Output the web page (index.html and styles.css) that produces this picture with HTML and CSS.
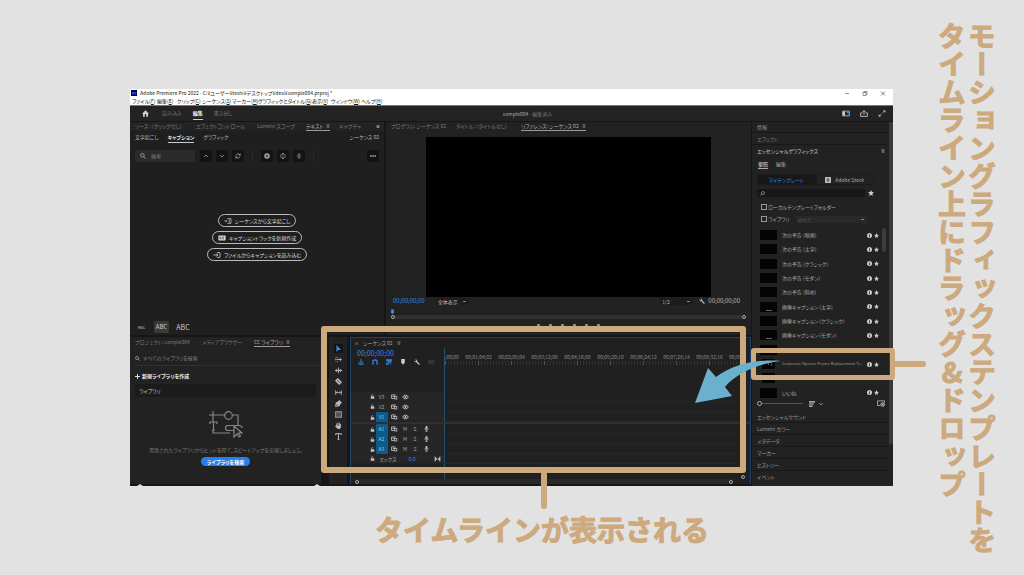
FILE: index.html
```html
<!DOCTYPE html>
<html lang="ja">
<head>
<meta charset="utf-8">
<title>タイムラインへのドラッグ&amp;ドロップ</title>
<link rel="stylesheet" href="styles.css">
</head>
<body>
<svg class="defs" aria-hidden="true">
  <symbol id="search" viewBox="0 0 10 10"><g fill="none" stroke="currentColor" stroke-width="1.4"><circle cx="4" cy="4" r="3"/><path d="M6.3 6.3 9.5 9.5"/></g></symbol>
  <symbol id="searchflip" viewBox="0 0 10 10"><g fill="none" stroke="currentColor" stroke-width="1.3"><circle cx="6" cy="4" r="3"/><path d="M3.7 6.3.5 9.5"/></g></symbol>
  <symbol id="star" viewBox="0 0 10 10"><path fill="currentColor" d="M5 0 6.5 3.4 10 3.8 7.3 6.2 8.1 9.8 5 8 1.9 9.8 2.7 6.2 0 3.8 3.5 3.4z"/></symbol>
  <symbol id="info" viewBox="0 0 10 10"><circle cx="5" cy="5" r="5" fill="currentColor"/><path d="M5 1.8v1.6M5 4.2v4" stroke="#222" stroke-width="1.6"/></symbol>
  <symbol id="home" viewBox="0 0 10 10"><path fill="currentColor" d="M5 .5 10 5.2H8.6V9.5H6V6.2H4V9.5H1.4V5.2H0z"/></symbol>
  <symbol id="lock" viewBox="0 0 10 10"><path d="M3 5V3a2 2 0 0 1 3.6-1" fill="none" stroke="currentColor" stroke-width="1.4"/><path fill="currentColor" d="M1.5 4.5h7v5h-7z"/></symbol>
  <symbol id="sync" viewBox="0 0 12 10"><path d="M1 1.5h7M1 1.5v6h4M3 4h7v4.5H6V4" fill="none" stroke="currentColor" stroke-width="1.5"/></symbol>
  <symbol id="eye" viewBox="0 0 12 10"><path d="M1 5q5-6.500 10 0-5 6.500-10 0z" fill="none" stroke="currentColor" stroke-width="1.6"/><circle cx="6" cy="5" r="1.800" fill="currentColor"/></symbol>
  <symbol id="mic" viewBox="0 0 10 12"><rect x="3" y="0" width="4" height="7" rx="2" fill="currentColor"/><path d="M1.500 5q0 3.500 3.500 3.500T8.500 5M5 8.500V11M3 11.300h4" fill="none" stroke="currentColor" stroke-width="1.400"/></symbol>
  <symbol id="wrench" viewBox="0 0 10 10"><path d="M4 4 8.500 8.700" stroke="currentColor" stroke-width="2" stroke-linecap="round"/><path d="M2 .6 4 2.500 2.600 4 .7 2A2.800 2.800 0 0 0 5 4.800 2.900 2.900 0 0 0 2 .6z" fill="currentColor"/></symbol>
  <symbol id="down" viewBox="0 0 10 10"><path d="M2 3.500 5 6.500 8 3.500" fill="none" stroke="currentColor" stroke-width="1.400"/></symbol>
  <symbol id="up" viewBox="0 0 10 10"><path d="M2 6.500 5 3.500 8 6.500" fill="none" stroke="currentColor" stroke-width="1.400"/></symbol>
  <symbol id="menu" viewBox="0 0 10 10"><path d="M1.500 2h7M1.500 5h7M1.500 8h7" stroke="currentColor" stroke-width="1.400"/></symbol>
  <symbol id="marker" viewBox="0 0 10 10"><path d="M2 0h6v6L5 9.500 2 6z" fill="currentColor"/></symbol>
</svg>

<div class="stage">
<main class="app">
  <header class="chrome">
    <div class="titlebar"><span class="logo">Pr</span><span class="title">Adobe Premiere Pro 2022 - C:¥ユーザー¥teshi¥デスクトップ¥desi¥sample004.prproj *</span>
      <span class="win">
        <button aria-label="最小化"><svg viewBox="0 0 10 10"><path d="M1 5h8" stroke="#333"/></svg></button>
        <button aria-label="元に戻す"><svg viewBox="0 0 10 10"><path d="M1 3h6v6H1zM3 3V1h6v6H7" fill="none" stroke="#333"/></svg></button>
        <button aria-label="閉じる"><svg viewBox="0 0 10 10"><path d="m1 1 8 8M9 1 1 9" stroke="#333" stroke-width="1.200"/></svg></button>
      </span>
    </div>
    <nav class="menubar"><span>ファイル(<u>F</u>)</span><span>編集(<u>E</u>)</span><span>クリップ(<u>C</u>)</span><span>シーケンス(<u>S</u>)</span><span>マーカー(<u>M</u>)</span><span>グラフィックとタイトル(<u>G</u>)</span><span>表示(<u>V</u>)</span><span>ウィンドウ(<u>W</u>)</span><span>ヘルプ(<u>H</u>)</span></nav>
  </header>

  <div class="topbar">
    <button class="homebtn" aria-label="ホーム"><svg><use href="#home"/></svg></button>
    <nav class="modes"><button>読み込み</button><button class="on">編集</button><button>書き出し</button></nav>
    <div class="project"><b>sample004</b> - 編集済み</div>
    <div class="topicons">
      <svg viewBox="0 0 12 10"><path d="M1 1.500h10v7H1z" fill="none" stroke="#ccc" stroke-width="1.200"/><path d="M1 2h3.500v6H1z" fill="#ccc"/><circle cx="9.500" cy="3" r="2.200" fill="#2d8ceb"/></svg>
      <svg viewBox="0 0 12 10"><path d="M3.500 4H1v5.300h10V4H8.500M6 7V1M3.800 3 6 .8 8.200 3" fill="none" stroke="#ccc" stroke-width="1.300"/></svg>
      <svg viewBox="0 0 12 10"><path d="M7 4 10 1M5 6 2 9" stroke="#ccc" stroke-width="1.300"/><path d="M7.500.5H11V4zM1 6v3.500h3.500z" fill="#ccc"/></svg>
    </div>
  </div>

  <div class="work">
    <div class="mainarea">
      <div class="upper">
        <section class="panel captions">
          <div class="tabs tabs-left"><span>ソース : (クリップなし)</span><span>エフェクトコントロール</span><span>Lumetri スコープ</span><span class="on">テキスト <svg><use href="#menu"/></svg></span><span>キャプチャ</span><b>»</b></div>
          <div class="subtabs"><button>文字起こし</button><button class="on">キャプション</button><button>グラフィック</button><span>シーケンス 02</span></div>
          <div class="tools-row">
            <label class="search"><svg><use href="#search"/></svg><input type="text" placeholder="検索" aria-label="検索"></label>
            <button aria-label="前へ"><svg><use href="#up"/></svg></button>
            <button aria-label="次へ"><svg><use href="#down"/></svg></button>
            <button aria-label="置換"><svg viewBox="0 0 10 10"><path d="M1.500 4A3.800 3.800 0 0 1 8.500 3.500M8.500 6A3.800 3.800 0 0 1 1.500 6.500M8.700.7v3H6M1.300 9.300v-3H4" fill="none" stroke="currentColor" stroke-width="1.200"/></svg></button>
            <i></i>
            <button aria-label="追加"><svg viewBox="0 0 10 10"><circle cx="5" cy="5" r="4.500" fill="currentColor"/><path d="M5 2.800v4.400M2.800 5h4.400" stroke="#111" stroke-width="1.300"/></svg></button>
            <button aria-label="分割"><svg viewBox="0 0 10 10"><path d="M1 3.500V3h8v.5M1 6.500V7h8v-.5M0 5h2M8 5h2M5 0v2.500M5 7.500V10M3.500 1.500 5 0l1.500 1.500M3.500 8.500 5 10l1.500-1.500" fill="none" stroke="currentColor"/></svg></button>
            <button aria-label="結合"><svg viewBox="0 0 10 10"><path d="M1 5h8M5 0v3.500M5 6.500V10M3 2l2 1.800L7 2M3 8l2-1.800L7 8" fill="none" stroke="currentColor"/></svg></button>
            <i></i>
            <button class="more" aria-label="その他"><svg viewBox="0 0 10 10"><g fill="#ddd"><circle cx="1.500" cy="5" r="1.300"/><circle cx="5" cy="5" r="1.300"/><circle cx="8.500" cy="5" r="1.300"/></g></svg></button>
          </div>
          <div class="starters">
            <button><svg viewBox="0 0 12 10"><path d="M5 1h6v8H5M0 5h4M7 3h2.500M7 5h2.500M7 7h2.500M3 3v4" fill="none" stroke="currentColor"/></svg>シーケンスから文字起こし</button>
            <button><svg viewBox="0 0 12 10"><rect y="1" width="12" height="8" rx="1" fill="currentColor"/><path d="M5 3.500H2.500v3H5M9.500 3.500H7v3h2.500" fill="none" stroke="#1f1f1f"/></svg>キャプショントラックを新規作成</button>
            <button><svg viewBox="0 0 12 10"><path d="M6 1h5v8H6M0 5h7M5 2.500 7.500 5 5 7.500" fill="none" stroke="currentColor" stroke-width="1.200"/></svg>ファイルからキャプションを読み込む</button>
          </div>
          <div class="sizes"><button>ABC</button><button class="on">ABC</button><button>ABC</button></div>
        </section>

        <section class="panel monitor">
          <div class="tabs tabs-mon"><span>プログラム: シーケンス 02</span><span>タイトル : (タイトルなし)</span><span class="on">リファレンス: シーケンス 02 <svg><use href="#menu"/></svg></span></div>
          <div class="screen"></div>
          <div class="moncontrols"><span class="tc">00;00;00;00</span><select aria-label="ズーム"><option>全体表示</option></select><span class="grow"></span><select aria-label="解像度"><option>1/2</option></select><svg><use href="#wrench"/></svg><span class="dur">00;00;00;00</span></div>
          <div class="monruler"><svg class="head"><use href="#marker"/></svg><div class="scrub"><i></i><i></i></div></div>
          <div class="transport"><i></i><i></i><i></i><i></i><i></i><i></i></div>
        </section>
      </div>

      <div class="lower">
        <section class="panel library">
          <div class="tabs tabs-lib"><span>プロジェクト: sample004</span><span>メディアブラウザー</span><span class="on">CC ライブラリ <svg><use href="#menu"/></svg></span></div>
          <label class="libsearch"><svg><use href="#search"/></svg><input type="text" placeholder="すべてのライブラリを検索" aria-label="ライブラリ検索"></label>
          <button class="newlib"><svg viewBox="0 0 10 10"><path d="M5 0v10M0 5h10" stroke="#ddd" stroke-width="2"/></svg>新規ライブラリを作成</button>
          <div class="libhead">ライブラリ</div>
          <svg class="art" viewBox="0 0 34 28"><g fill="none" stroke="#858585" stroke-width="1.200"><path d="M4 0v8M0 4h16M23 4h6v10M4 8v3M4 19v3h17"/><circle cx="19.500" cy="4.500" r="3.800"/><path d="M1 13v-2h7v2M4.500 11v8M3 19h3M25 19.500h-6q-2.500 0-2.500-2.500t2.500-2.500h11q3 0 3 2.500M25 15v11l3-3 2 3 1.500-1-2-3h3.500z"/></g></svg>
          <p>用意されたライブラリからヒントを得て、スピードアップを実現しましょう。</p>
          <button class="cta">ライブラリを検索</button>
        </section>

        <section class="toolstrip" aria-label="ツール">
          <button class="on" aria-label="選択"><svg viewBox="0 0 10 10"><path d="M2 0v10l2.800-3H9z" fill="#2d8ceb"/></svg></button>
          <button aria-label="トラック選択"><svg viewBox="0 0 10 10"><path d="M1 2h1M3.500 2h1M1 8h1M3.500 8h1M1 4v2M2 5h7M7 3l2 2-2 2" fill="none" stroke="currentColor" stroke-width="1.300"/></svg></button>
          <button aria-label="リップル"><svg viewBox="0 0 10 10"><path d="M5 1v8M0 5h10" stroke="currentColor" stroke-width="1.300"/><path d="M3 2.500v5L0 5zM7 2.500v5L10 5z" fill="currentColor"/></svg></button>
          <button aria-label="レーザー"><svg viewBox="0 0 10 10"><path d="M4 0 10 6 6 10 0 4z" fill="currentColor"/><path d="M3 3l4 4" stroke="#222"/></svg></button>
          <button aria-label="スリップ"><svg viewBox="0 0 12 10"><path d="M1 1v8M11 1v8M2 5h8M4 3 2 5l2 2M8 3l2 2-2 2" fill="none" stroke="currentColor" stroke-width="1.300"/></svg></button>
          <button aria-label="ペン"><svg viewBox="0 0 10 10"><path d="M6 0 10 4 8.500 5 6 9 0 10 1 4 5 1.500z" fill="currentColor"/><path d="M1 9l3-3" stroke="#222"/></svg></button>
          <button aria-label="長方形"><svg viewBox="0 0 10 10"><path d="M0.500 1h9v8h-9z" fill="#555" stroke="currentColor"/></svg></button>
          <button aria-label="手のひら"><svg viewBox="0 0 10 10"><path d="M2.500 6V2M4.300 5V1M6.200 5V1M8 6V2.500" stroke="currentColor" stroke-width="1.300"/><path d="M1.900 5h6.700v2L7 10H4L0 6l1-.7z" fill="currentColor"/></svg></button>
          <button aria-label="文字"><svg viewBox="0 0 10 10"><path d="M1 3V1h8v2M5 1v8M3.500 9h3" fill="none" stroke="currentColor" stroke-width="1.400"/></svg></button>
        </section>

        <section class="timeline">
          <div class="seqtab"><button aria-label="閉じる">×</button><span>シーケンス 02</span><svg><use href="#menu"/></svg></div>
          <div class="tlgrid">
            <div class="tlhead">
              <div class="tc">00;00;00;00</div>
              <div class="toggles">
                <svg class="blue" viewBox="0 0 10 10"><path d="M5 0v10M1 7l3-3M9 7 6 4M0 8.500h10" stroke="currentColor" stroke-width="1.500"/></svg>
                <svg class="blue" viewBox="0 0 10 10"><path d="M1.500 9.500V5a3.500 3.500 0 0 1 7 0v4.500" fill="none" stroke="currentColor" stroke-width="2"/></svg>
                <svg class="blue" viewBox="0 0 10 10"><path d="M0 1h10v2H0zM3 4h5v2H3zM0 7h4v2H0zM8 3v7" fill="currentColor" stroke="currentColor"/></svg>
                <svg><use href="#marker"/></svg>
                <svg><use href="#wrench"/></svg>
                <svg class="dim" viewBox="0 0 12 10"><path d="M1 1.500h10v7H1zM5 3.500H3v3h2M9 3.500H7v3h2" fill="none" stroke="currentColor"/></svg>
              </div>
            </div>
            <div class="ruler">
              <div class="marks"><span>;00;00</span><span>00;01;04;02</span><span>00;02;08;04</span><span>00;03;12;06</span><span>00;04;16;08</span><span>00;05;20;10</span><span>00;06;24;12</span><span>00;07;28;14</span><span>00;08;32;16</span><span>00;09</span></div>
              <div class="ticks"></div>
            </div>
          </div>
          <div class="space"><div></div><div></div></div>
          <div class="tracks">
            <div class="track"><div><svg><use href="#lock"/></svg><b>V3</b><svg><use href="#sync"/></svg><svg><use href="#eye"/></svg></div><div></div></div>
            <div class="track"><div><svg><use href="#lock"/></svg><b>V2</b><svg><use href="#sync"/></svg><svg><use href="#eye"/></svg></div><div></div></div>
            <div class="track"><div><svg><use href="#lock"/></svg><b class="on">V1</b><svg><use href="#sync"/></svg><svg><use href="#eye"/></svg></div><div></div></div>
            <div class="divider"></div>
            <div class="track"><div><svg><use href="#lock"/></svg><b class="on">A1</b><svg><use href="#sync"/></svg><span>M</span><span>S</span><svg><use href="#mic"/></svg></div><div></div></div>
            <div class="track"><div><svg><use href="#lock"/></svg><b class="on">A2</b><svg><use href="#sync"/></svg><span>M</span><span>S</span><svg><use href="#mic"/></svg></div><div></div></div>
            <div class="track"><div><svg><use href="#lock"/></svg><b class="on">A3</b><svg><use href="#sync"/></svg><span>M</span><span>S</span><svg><use href="#mic"/></svg></div><div></div></div>
            <div class="track mix"><div><svg><use href="#lock"/></svg><span class="name">ミックス</span><span class="val">0.0</span><svg class="fit" viewBox="0 0 10 10"><path d="M1 1v8M9 1v8" stroke="#ccc" stroke-width="1.500"/><path d="M1 2v6l4-3zM9 2v6L5 5z" fill="#ccc"/></svg></div><div></div></div>
          </div>
          <div class="space tail"><div></div><div><i class="knob"></i></div></div>
          <div class="hscroll"><i class="knob"></i><i class="knob"></i></div>
        </section>
      </div>
      <div class="floor"><i></i><i></i></div>
    </div>

    <aside class="side">
      <div class="sidemain">
        <h2>情報</h2>
        <h2>エフェクト</h2>
        <h2 class="on">エッセンシャルグラフィックス<svg><use href="#menu"/></svg></h2>
        <div class="egtabs"><button class="on">参照</button><button>編集</button></div>
        <div class="segs"><button class="on">マイテンプレート</button><button><svg viewBox="0 0 10 10"><rect width="10" height="10" rx="1" fill="#bbb"/><path d="M7 3H4v2h2.500v2H3" fill="none" stroke="#222"/></svg>Adobe Stock</button></div>
        <div class="egsearch"><label><svg><use href="#searchflip"/></svg><input type="text" aria-label="テンプレート検索"></label><svg><use href="#star"/></svg></div>
        <div class="check"><label><input type="checkbox">ローカルテンプレートフォルダー</label></div>
        <div class="check"><label><input type="checkbox">ライブラリ</label><select aria-label="ライブラリ選択"><option>すべて</option></select></div>
        <div class="listwrap">
          <ul>
            <li><i></i><span>次の予告 (映画)</span><svg><use href="#info"/></svg><svg><use href="#star"/></svg></li>
            <li><i></i><span>次の予告 (太字)</span><svg><use href="#info"/></svg><svg><use href="#star"/></svg></li>
            <li><i></i><span>次の予告 (クラシック)</span><svg><use href="#info"/></svg><svg><use href="#star"/></svg></li>
            <li><i></i><span>次の予告 (モダン)</span><svg><use href="#info"/></svg><svg><use href="#star"/></svg></li>
            <li><i></i><span>次の予告 (斜め)</span><svg><use href="#info"/></svg><svg><use href="#star"/></svg></li>
            <li><i class="cap"></i><span>画像キャプション (太字)</span><svg><use href="#info"/></svg><svg><use href="#star"/></svg></li>
            <li><i></i><span>画像キャプション (クラシック)</span><svg><use href="#info"/></svg><svg><use href="#star"/></svg></li>
            <li><i class="cap"></i><span>画像キャプション (モダン)</span><svg><use href="#info"/></svg><svg><use href="#star"/></svg></li>
            <li><i></i></li>
            <li><i class="sq"><svg viewBox="0 0 10 8"><path d="M1 1l2 2M5 6a2 2 0 1 1 3-2M7 6h2" fill="none" stroke="#999"/></svg></i><span class="latin">Corporate Opener Promo Replacement Ti...</span><svg><use href="#info"/></svg><svg><use href="#star"/></svg></li>
            <li><i class="sq"></i></li>
            <li><i></i><span>いいね</span><svg><use href="#info"/></svg><svg><use href="#star"/></svg></li>
          </ul>
          <div class="listbar"></div>
        </div>
        <div class="listfoot"><input type="range" min="0" max="100" value="0" aria-label="サムネールサイズ"><svg viewBox="0 0 10 10"><path d="M0 1.500h10M0 5h8M0 8.500h6" stroke="#ccc" stroke-width="1.800"/></svg><svg><use href="#down"/></svg><svg class="add" viewBox="0 0 12 10"><path d="M5 8H.7V1h10.600v3" fill="none" stroke="#bbb" stroke-width="1.200"/><circle cx="8.500" cy="6.500" r="2.700" fill="#222" stroke="#ddd" stroke-width="1.200"/><path d="M8.500 5v3M7 6.500h3" stroke="#ddd"/></svg></div>
        <h3>エッセンシャルサウンド</h3><h3>Lumetri カラー</h3><h3>メタデータ</h3><h3>マーカー</h3><h3>ヒストリー</h3><h3>イベント</h3>
      </div>
      <div class="sidebar"></div>
    </aside>
  </div>

  <div class="frame frame-tl"></div>
  <div class="stem stem-tl"></div>
  <div class="frame frame-item"></div>
  <div class="stem stem-item"></div>
  <svg class="arrow" viewBox="0 0 86 44" aria-hidden="true"><path d="M0 43 13 8l8 9C38 4 62-1 86 1 66 3 42 12 30 27l7 9z" fill="#6bb1cd"/></svg>
</main>
<p class="note note-v">モーショングラフィックステンプレートを<br>タイムライン上にドラッグ&amp;ドロップ</p>
<p class="note note-h">タイムラインが表示される</p>
</div>
</body>
</html>
```
FILE: styles.css
```css
* { box-sizing: border-box; }
body { margin: 0; background: #e2e2e2; font: 5px/8px "Noto Sans CJK JP", sans-serif; font-feature-settings: "palt"; color: #a8a8a8; }
.defs { position: absolute; width: 0; height: 0; }
button, input, select { font: inherit; font-feature-settings: inherit; color: inherit; background: none; border: 0; padding: 0; margin: 0; border-radius: 0; appearance: none; min-width: 0; text-align: left; }
svg { width: 6px; height: 6px; flex: none; display: block; }
p, h2, h3, ul { margin: 0; padding: 0; font-weight: 400; font-size: 5px; }
span, button { white-space: nowrap; }

.stage { display: grid; grid-template-columns: 130px minmax(0, 1fr) 131px; grid-template-rows: 89px auto 1fr; }
.note { color: #cda97e; font: 700 28px/30px "Noto Sans CJK JP", sans-serif; font-feature-settings: normal; white-space: nowrap; -webkit-text-stroke: 1px #cda97e; }
.note-v { grid-column: 3; grid-row: 1 / span 3; justify-self: end; margin-right: 27px; padding-top: 22px; writing-mode: vertical-rl; text-orientation: upright; height: 560px; }
.note-h { grid-column: 2; grid-row: 3; padding: 28px 0 0 245px; }

.app { grid-column: 2; grid-row: 2; position: relative; background: #161616; display: flex; flex-direction: column; }

.chrome { background: #fff; color: #222; border-bottom: 1px solid #777; }
.titlebar { display: flex; align-items: center; gap: 3px; padding-left: 1px; }
.logo { background: #00005b; color: #99f; font-size: 4px; line-height: 6px; width: 6px; text-align: center; }
.win { margin-left: auto; display: flex; gap: 12px; padding-right: 7px; }
.win svg { width: 6px; height: 5px; }
.menubar { display: grid; grid-template-columns: 25px 20px 25px 30px 26px 54px 19px 30px 1fr; padding-left: 2px; }

.topbar { display: grid; grid-template-columns: 32px 1fr auto 1fr; align-items: center; height: 15px; background: #232323; }
.homebtn { padding-left: 12px; color: #ccc; }
.homebtn svg { width: 7px; height: 7px; }
.modes { display: flex; gap: 11px; color: #777; }
.modes button { line-height: 12px; border-bottom: 1px solid transparent; }
.modes .on { color: #eee; border-color: #ccc; font-weight: 700; }
.project { color: #777; }
.project b { font-weight: 400; color: #aaa; }
.topicons { display: flex; justify-content: flex-end; gap: 10px; padding-right: 7px; }
.topicons svg { width: 8px; height: 7px; }

.work { display: grid; grid-template-columns: minmax(0, 1fr) 141px; gap: 1px; border-top: 1px solid #161616; }
.mainarea { display: flex; flex-direction: column; }
.upper { display: grid; grid-template-columns: 254px minmax(0, 1fr); gap: 2px; min-height: 213px; margin-bottom: 2px; }
.panel { background: #222; display: flex; flex-direction: column; }
.captions { background: #1f1f1f; }
.tabs { display: grid; color: #7c7c7c; line-height: 8px; padding-left: 5px; }
.tabs span { justify-self: start; }
.tabs .on { color: #b4b4b4; border-bottom: 1px solid #999; display: flex; align-items: center; gap: 3px; }
.tabs svg { width: 4px; height: 4px; }
.tabs-left { grid-template-columns: 61px 61px 49px 33px 1fr 8px; background: #232323; }
.tabs-left b { font-size: 7px; color: #ccc; }
.subtabs { display: flex; gap: 9px; padding: 1px 5px 0; color: #bbb; }
.subtabs button { line-height: 10px; border-bottom: 1px solid transparent; }
.subtabs .on { color: #eee; border-color: #ccc; font-weight: 700; }
.subtabs span { margin-left: auto; line-height: 10px; }
.tools-row { display: flex; align-items: center; gap: 4px; padding: 7px 5px 0; color: #aaa; }
.tools-row button { width: 12px; height: 12px; background: #141414; display: grid; place-items: center; border-radius: 1px; }
.tools-row i { width: 1px; height: 12px; background: #2b2b2b; margin: 0 4px; }
.search { display: flex; align-items: center; gap: 5px; width: 60px; height: 12px; padding-left: 5px; margin-right: 1px; background: #2a2a2a; border-radius: 1px; }
.search input { width: 40px; }
::placeholder { color: #808080; opacity: 1; }
.tools-row .more { margin-left: auto; }
.starters { flex: 1; display: flex; flex-direction: column; align-items: center; justify-content: flex-end; gap: 4px; padding-bottom: 60px; color: #ddd; }
.starters button { display: flex; align-items: center; gap: 3px; height: 13px; padding: 0 5px; border: 1px solid #bbb; border-radius: 7px; }
.starters svg { width: 8px; }
.sizes { display: flex; align-items: center; gap: 7px; padding: 0 6px 2px; color: #ccc; }
.sizes button { font-size: 4px; line-height: 12px; width: 11px; text-align: center; }
.sizes .on { width: 15px; font-size: 6px; background: #3a3a3a; border-radius: 1px; }
.sizes button:last-child { font-size: 7px; width: 14px; }

.tabs-mon { grid-template-columns: 65px 65px 1fr; }
.screen { background: #000; height: 160px; margin: 6px 40px 0; }
.moncontrols { display: flex; align-items: center; gap: 6px; padding: 0 11px 0 7px; color: #bbb; }
.tc { color: #2d8ceb; font-size: 6px; }
.dur { font-size: 6px; margin-left: -3px; }
.grow { flex: 1; }
select { width: 33px; height: 7px; padding: 0 2px; background: #1c1c1c linear-gradient(#888, #888) no-repeat right 3px center / 3px 1px; line-height: 7px; }
.moncontrols select { margin-left: 5px; }
.monruler { padding: 4px 5px 0; }
.head { color: #2d8ceb; width: 5px; height: 6px; margin-left: -1px; }
.scrub { height: 4px; background: #303030; display: flex; justify-content: space-between; align-items: center; }
.scrub i, .knob { width: 4px; height: 4px; border: 1px solid #aaa; border-radius: 50%; background: #222; }
.transport { display: flex; justify-content: center; gap: 9px; padding-top: 5px; }
.transport i { width: 3px; height: 4px; background: #888; }

.lower { display: grid; grid-template-columns: 191px 23px minmax(0, 1fr); column-gap: 3px; }
.tabs-lib { grid-template-columns: 67px 52px 1fr; padding-top: 1px; }
.libsearch { display: flex; align-items: center; gap: 3px; margin: 6px 0 0 5px; padding-bottom: 2px; border-bottom: 1px solid #303030; height: 13px; }
.libsearch svg { width: 5px; height: 5px; }
.libsearch input { width: 130px; }
.newlib { display: flex; align-items: center; gap: 2px; padding: 6px 0 4px 5px; color: #eee; font-weight: 700; }
.newlib svg { width: 5px; height: 5px; }
.libhead { margin: 0 5px; background: #1b1b1b; color: #ccc; line-height: 13px; padding-left: 4px; }
.art { width: 34px; height: 28px; margin: 14px auto 7px; }
.library p { text-align: center; color: #7c7c7c; }
.cta { align-self: center; margin-top: 3px; padding: 0 6px; line-height: 9px; border-radius: 5px; background: #2680eb; color: #fff; font-weight: 700; }
.toolstrip { background: #222; margin-left: 5px; padding: 7px 0 0 5px; color: #bbb; }
.toolstrip button { display: grid; place-items: center; width: 9px; height: 9px; margin-bottom: 2px; }
.toolstrip .on { background: #141414; }
.toolstrip svg { width: 7px; height: 7px; }

.timeline { --heads: 93px; background: #202020; border: 1px solid #1d4468; border-bottom: 0; display: flex; flex-direction: column; min-height: 147px; }
.seqtab { display: flex; align-items: center; gap: 4px; line-height: 10px; padding-left: 3px; }
.seqtab svg { width: 4px; height: 4px; }
.tlgrid { display: grid; grid-template-columns: var(--heads) minmax(0, 1fr); }
.tlhead { padding-left: 6px; }
.tlhead .tc { font-size: 7px; line-height: 10px; }
.toggles { display: flex; gap: 8px; color: #ccc; padding: 1px; }
.toggles svg { width: 6px; height: 6px; }
.toggles .blue { color: #2d8ceb; }
.toggles .dim { color: #555; }
.ruler { padding-top: 5px; color: #8c8c8c; border-left: 1px solid #24506f; }
.marks { display: flex; }
.marks span { flex: 0 0 33px; text-align: center; }
.marks span:first-child { flex-basis: 17px; text-align: left; }
.marks span:last-child { flex-basis: 20px; text-align: left; padding-left: 3px; }
.ticks { height: 4px; background: repeating-linear-gradient(90deg, #555 0 1px, transparent 1px 33px), repeating-linear-gradient(90deg, #333 0 1px, transparent 1px 3px); }
.space { flex: 1; display: grid; grid-template-columns: var(--heads) 1fr; }
.space div:last-child { border-left: 1px solid #24506f; }
.track { display: grid; grid-template-columns: var(--heads) 1fr; }
.track > div:first-child { display: grid; grid-template-columns: 6px 13px 12px 10px 10px 12px; align-items: center; justify-items: center; padding-left: 18px; height: 10px; background: #262626; border-bottom: 1px solid #222; }
.track > div:last-child { border-left: 1px solid #24506f; border-bottom: 1px solid #272727; }
.track b { width: 12px; line-height: 9px; text-align: center; font-weight: 400; }
.track b.on { background: #0d5a8e; line-height: 10px; color: #9cc; }
.track svg { width: 7px; height: 6px; color: #c4c4c4; }
.track > div:first-child > svg:first-child { width: 5px; height: 5px; }
.divider { height: 2px; background: #303030; }
.track.mix > div:first-child { grid-template-columns: 6px 26px 22px 1fr; }
.mix .val { color: #2d8ceb; }
.mix .fit { justify-self: end; margin-right: 3px; }
.tail { flex: 0 0 15px; }
.tail div:last-child { display: flex; justify-content: flex-end; align-items: flex-end; padding-right: 5px; }
.hscroll { display: flex; justify-content: space-between; align-items: center; height: 5px; background: #292929; margin: 0 17px 0 4px; }
.floor { display: flex; gap: 171px; height: 2px; padding-left: 7px; }
.floor i { border: 3px solid transparent; border-top: 0; border-bottom: 2px solid #ddd; }

.side { display: grid; grid-template-columns: minmax(0, 1fr) 4px; background: #222; }
.sidebar { background: #383838; margin-bottom: 42px; }
.sidemain { display: flex; flex-direction: column; padding-right: 1px; }
.side h2, .side h3 { line-height: 11px; padding-left: 5px; border-bottom: 1px solid #181818; color: #999; }
.side h2 { line-height: 10px; }
.side h2:nth-child(2) { color: #777; line-height: 11px; }
.side h2.on { display: flex; justify-content: space-between; align-items: center; border: 0; color: #ccc; padding-right: 3px; line-height: 12px; }
.side h2 svg { width: 4px; height: 4px; }
.egtabs { display: flex; gap: 8px; padding: 2px 0 5px 6px; }
.egtabs button { line-height: 9px; border-bottom: 1px solid transparent; }
.egtabs .on { color: #eee; border-color: #aaa; }
.segs { display: grid; grid-template-columns: 1fr 1fr; margin: 0 14px 0 5px; }
.segs button { height: 11px; display: flex; align-items: center; justify-content: center; gap: 4px; border: 1px solid #1b1b1b; }
.segs .on { background: #181818; color: #2d8ceb; }
.egsearch { display: flex; align-items: center; gap: 3px; padding: 4px 14px 4px 5px; }
.egsearch label { flex: 1; display: flex; align-items: center; background: #171717; height: 8px; padding-left: 3px; }
.egsearch label svg { width: 5px; height: 5px; }
.egsearch input { flex: 1; height: 8px; }
.egsearch > svg { color: #ccc; }
.check { display: flex; align-items: center; gap: 6px; height: 12px; padding-left: 9px; }
.check label { display: flex; align-items: center; gap: 1px; white-space: nowrap; }
.check input { width: 6px; height: 6px; border: 1px solid #999; }
.check select { width: 71px; background-color: #292929; color: #606060; }
.listwrap { display: grid; grid-template-columns: minmax(0, 1fr) 4px; gap: 3px; padding: 3px 2px 0 8px; height: 175px; }
.listbar { background: #3c3c3c; height: 24px; border-radius: 2px; }
.listwrap ul { display: flex; flex-direction: column; list-style: none; }
li { flex: 1; min-height: 0; display: grid; grid-template-columns: 17px minmax(0, 1fr) 5px 5px; align-items: center; column-gap: 2px; }
li i { height: 10px; background: #040404; }
li .cap { background: linear-gradient(#666, #666) no-repeat center bottom 1px / 6px 1px #040404; }
li .sq { width: 13px; margin-left: 2px; padding: 1px 3px; }
li .sq svg { width: 8px; height: 7px; }
li span { padding-left: 3px; }
li .latin { font-family: "Open Sans", sans-serif; font-size: 4px; }
li > svg { width: 5px; height: 5px; color: #ccc; }
.listfoot { display: flex; align-items: center; gap: 3px; height: 11px; padding: 0 3px 4px 5px; }
.listfoot input { width: 46px; height: 5px; margin-right: 3px; background: linear-gradient(#555, #555) no-repeat center / 100% 1px; }
.listfoot input::-webkit-slider-thumb { appearance: none; width: 5px; height: 5px; border: 1px solid #aaa; border-radius: 50%; background: #222; }
.listfoot .add { margin-left: auto; width: 8px; height: 7px; }
.side h3:last-child { border: 0; }

.frame { position: absolute; border: 6px solid #cda97e; border-radius: 3px; }
.frame-tl { left: 191px; right: 147px; top: 237px; height: 147px; }
.frame-item { right: -2px; width: 144px; top: 259px; height: 32px; border-width: 5px; }
.stem { position: absolute; background: #cda97e; border-radius: 3px; }
.stem-tl { left: 411px; top: 382px; width: 6px; height: 38px; }
.stem-item { right: -33px; top: 272px; width: 34px; height: 6px; }
.arrow { position: absolute; right: 112px; top: 271px; width: 86px; height: 44px; }
```
